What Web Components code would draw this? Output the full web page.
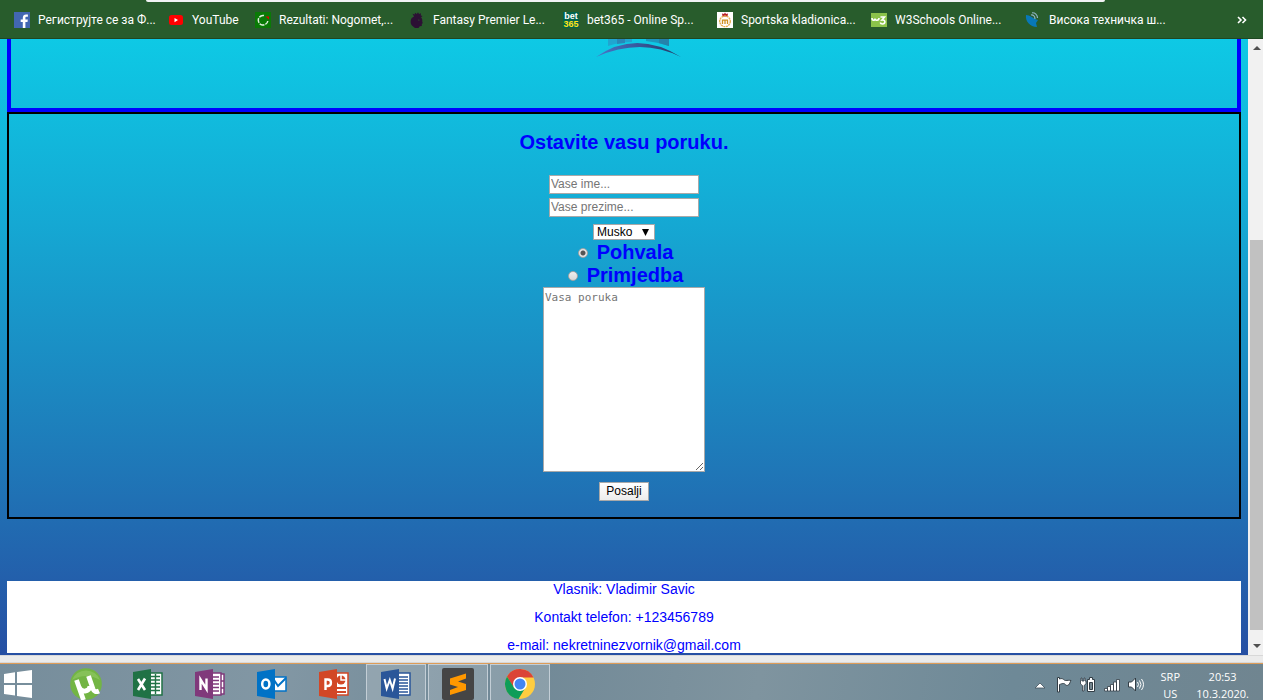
<!DOCTYPE html>
<html lang="sr">
<head>
<meta charset="utf-8">
<title>Nekretnine Zvornik</title>
<style>
  html, body { margin: 0; height: 100%; overflow: hidden; }
  body { font-family: "Liberation Sans", Arial, sans-serif; }
</style>
</head>
<body>
<desktop-screen></desktop-screen>

<script>
const define = (name, html, setup) => {
  const template = document.createElement('template');
  template.innerHTML = html;
  customElements.define(name, class extends HTMLElement {
    constructor() {
      super();
      this.attachShadow({ mode: 'open' }).append(template.content.cloneNode(true));
      if (setup) setup(this.shadowRoot, this);
    }
  });
};

/* One bookmark: icon slot and a label */
define('bookmark-link', `
<style>
  :host { display: block; flex: none; width: 154px; }
  :host([short]) { width: 87px; }
  a { display: flex; align-items: center; gap: 8px; color: #fff; text-decoration: none; white-space: nowrap; }
  ::slotted(svg) { flex: none; width: 16px; height: 16px; }
</style>
<a href="#"><slot name="icon"></slot><span><slot></slot></span></a>`);

define('bookmarks-bar', `
<style>
  :host { display: block; flex: none; background: #285c2c; border-bottom: 1px solid #1f4722; font: 12px/16px Roboto, "Open Sans", sans-serif; color: #fff; }
  .edge { height: 2px; margin: 0 158px 0 146px; background: #f1f3f4; border-radius: 0 0 8px 8px; }
  nav { display: flex; align-items: center; height: 36px; padding: 0 16px 0 14px; }
  button { margin-left: auto; padding: 0; border: 0; background: none; display: flex; }
</style>
<div class="edge"></div>
<nav aria-label="Bookmarks">
  <bookmark-link><svg slot="icon" viewBox="0 0 16 16"><path fill="#4267b2" d="M0 0h16v16H0z"/><path fill="#fff" d="M8.8 16v-6H6.7V7.600h2.100V5.800c0-2.100 1.300-3.300 3.200-3.300l1.900.1v2.200h-1.300c-1 0-1.200.5-1.200 1.200v1.600h2.400l-.3 2.400h-2.100v6z"/></svg>Региструјте се за Ф...</bookmark-link>
  <bookmark-link short><svg slot="icon" viewBox="0 0 16 16"><rect x="1" y="3" width="14" height="10" rx="2.500" fill="#f00"/><path fill="#fff" d="M6.500 6v4.200L10 8.100z"/></svg>YouTube</bookmark-link>
  <bookmark-link><svg slot="icon" viewBox="0 0 16 16"><path fill="#0a7a06" d="M0 0h16v16H0z"/><path fill="none" stroke="#dfeedd" stroke-width="1.500" stroke-dasharray="5 1" d="M9 3.500A4.800 4.800 0 1 0 12.800 9"/><path fill="#d00" d="M10.500 4.500h3.500v3z"/></svg>Rezultati: Nogomet,...</bookmark-link>
  <bookmark-link><svg slot="icon" viewBox="0 0 16 16"><path fill="#2c1034" d="M5 4.500 3.500 1.800 5.700 2.500 6 .8 7.800 2 9 .3 10 2l2-.8-.2 2.300 1.700.5-1.500 1.500c1.200 1 1.600 2.500 1.200 3.700l.6 2-1 .5v2.300l-2 .3L9.500 16H6l-2.500-2C1.500 12.500 1 8.500 2.800 6z"/><path fill="#285c2c" d="m9 7.500 2 .6-1.500.6z"/></svg>Fantasy Premier Le...</bookmark-link>
  <bookmark-link><svg slot="icon" viewBox="0 0 16 16"><path fill="#03634b" d="M0 0h16v16H0z"/><text x="8" y="7" text-anchor="middle" font-family="Liberation Sans" font-weight="700" font-size="9" fill="#fff">bet</text><text x="8" y="15" text-anchor="middle" font-family="Liberation Sans" font-weight="700" font-size="9" fill="#ffe418">365</text></svg>bet365 - Online Sp...</bookmark-link>
  <bookmark-link><svg slot="icon" viewBox="0 0 16 16"><path fill="#fff" d="M0 0h16v16H0z"/><path fill="#b8202a" d="M5 1.500 7 2l1-1.500L9 2l2-.5-.5 3h-5z"/><circle cx="8" cy="9.300" r="5.300" fill="none" stroke="#e7ad4b" stroke-width="1.400" stroke-dasharray="2 .6"/><path fill="none" stroke="#d09020" stroke-width="1.300" d="M5.500 12V8.200h5V12M8 8v4"/></svg>Sportska kladionica...</bookmark-link>
  <bookmark-link><svg slot="icon" viewBox="0 0 16 16"><path fill="#8bc34a" d="M0 1h16v14H0z"/><path fill="none" stroke="#fff" stroke-width="1.600" d="M1 6c0 3 3 3 3 .5 0 2.500 4 2.500 4-.5M9.500 5h4L11 8c4-.5 3.500 4 .5 4-1.200 0-2-.5-2.200-1.500"/></svg>W3Schools Online...</bookmark-link>
  <bookmark-link><svg slot="icon" viewBox="0 0 16 16"><path fill="#0878b8" d="M1 3c4 0 6 3 12 5l-2 3 1 4C5 15 0 9 1 3z"/><path fill="none" stroke="#8fb4c4" stroke-width="1.200" d="M6 3c2-.6 4 1 4 4M7 .8c3-.3 5.500 2 5.500 5.200"/></svg>Висока техничка ш...</bookmark-link>
  <button aria-label="More bookmarks"><svg width="10" height="8" viewBox="0 0 10 8"><path d="m1 1 3 3-3 3M5.500 1l3 3-3 3" fill="none" stroke="#fff" stroke-width="1.600"/></svg></button>
</nav>`);

define('site-hero', `
<style>
  :host { display: flex; justify-content: center; flex: none; box-sizing: border-box; height: 73px; border: solid #00f; border-width: 0 4px 4px; }
</style>
<svg width="114" height="20" viewBox="0 0 114 20" aria-hidden="true">
  <defs><linearGradient id="arc"><stop stop-color="#4a76c8"/><stop offset=".5" stop-color="#37579b"/><stop offset="1" stop-color="#27375f"/></linearGradient></defs>
  <path fill="#21a5d0" d="M41 0h24v3q-12 0-24 4z"/><path fill="#2a86b8" d="M50 0h8v4l-8 1z"/><path fill="#1c97bd" d="M79 0h23v7q-12-4-23-5z"/><path fill="#2482ab" d="M92 0h10v7l-10-3z"/>
  <path fill="url(#arc)" d="M29 18q40-28 85 0Q74-2 29 18z"/>
</svg>`);

define('message-form', `
<style>
  :host { display: block; flex: none; border: 2px solid #000; color: #00f; }
  form { display: flex; flex-direction: column; align-items: center; padding: 17px 0 16px; font-size: 20px; line-height: 23px; font-weight: 700; }
  h2 { margin: 0 0 21px; font-size: 20px; line-height: 23px; }
  input[type=text], select, textarea, button { box-sizing: border-box; margin: 0; border: 1px solid #a9a9a9; border-radius: 0; font: 12px/14px "Liberation Sans", Arial, sans-serif; color: #000; background-color: #fff; }
  input[type=text] { width: 150px; height: 19px; padding: 0 1px 2px; margin-bottom: 4px; }
  select { appearance: none; width: 62px; height: 16px; margin: 3px 0 1px; padding: 0 3px;
    background: #fff url("data:image/svg+xml,%3Csvg xmlns='http://www.w3.org/2000/svg' width='7' height='7'%3E%3Cpath d='M0 0h7L3.500 7z'/%3E%3C/svg%3E") no-repeat right 5px center; }
  label { display: flex; align-items: center; gap: 9px; padding-left: 3px; }
  input[type=radio] { appearance: none; box-sizing: border-box; width: 10px; height: 10px; margin: 0; border: 1px solid #a5a5a5; border-radius: 50%; background: linear-gradient(#eee, #d8d8d8); }
  input[type=radio]:checked { background: radial-gradient(circle, #555 0 2px, #e4e4e4 3px); }
  textarea { display: block; width: 162px; height: 185px; padding: 3px 1px; margin-bottom: 10px; font: 11px/14px "DejaVu Sans Mono", monospace; }
  ::placeholder { color: #757575; }
  button { height: 19px; padding: 0 6px 2px; background: linear-gradient(#fff, #ececec); }
</style>
<form onsubmit="return false">
  <h2>Ostavite vasu poruku.</h2>
  <input type="text" placeholder="Vase ime..." aria-label="Vase ime">
  <input type="text" placeholder="Vase prezime..." aria-label="Vase prezime">
  <select aria-label="Pol"><option>Musko</option><option>Zensko</option></select>
  <label><input type="radio" name="vrsta" checked>Pohvala</label>
  <label><input type="radio" name="vrsta">Primjedba</label>
  <textarea placeholder="Vasa poruka" aria-label="Vasa poruka"></textarea>
  <button>Posalji</button>
</form>`);

define('site-footer', `
<style>
  :host { display: flex; flex-direction: column; align-items: center; gap: 12px; flex: none; background: #fff; color: #00f; font-size: 14px; line-height: 16px; }
  p { margin: 0; }
</style>
<p>Vlasnik: Vladimir Savic</p>
<p>Kontakt telefon: +123456789</p>
<p>e-mail: nekretninezvornik@gmail.com</p>`);

define('scroll-track', `
<style>
  :host { display: flex; flex-direction: column; flex: none; width: 15px; background: #f1f1f1; }
  svg { display: block; flex: none; width: 15px; height: 17px; }
  .before { flex: 184; }
  .thumb { flex: 390; margin: 0 0 0 2px; background: #c1c1c1; }
  .after { flex: 8; }
</style>
<svg viewBox="0 0 15 17"><path fill="#505050" d="m5 11 4-4 4 4z"/></svg>
<div class="before"></div><div class="thumb"></div><div class="after"></div>
<svg viewBox="0 0 15 17"><path fill="#505050" d="m5 6 4 4 4-4z"/></svg>`);

define('web-page', `
<style>
  :host { display: flex; flex: 1; min-height: 0; }
  main { flex: 1; min-width: 0; overflow: hidden; display: flex; flex-direction: column; padding: 0 7px; background: linear-gradient(#0ec9e5, #15a8d3 30%, #1e7cba 66%, #264fa3); }
  site-footer { margin-top: 62px; }
</style>
<main><site-hero></site-hero><message-form></message-form><site-footer></site-footer></main>
<scroll-track></scroll-track>`);

define('task-button', `
<style>
  :host { display: block; flex: none; width: 62px; }
  button { box-sizing: border-box; display: flex; justify-content: center; width: 60px; height: 36px; margin: 0 1px; padding: 3px 0 0; border: 1px solid transparent; border-bottom: 0; background: none; }
  :host([open]) button { border-color: #c3ced6; background: #ffffff2e; }
  ::slotted(svg) { flex: none; width: 32px; height: 32px; }
</style>
<button><slot></slot></button>`,
(root, host) => root.querySelector('button').setAttribute('aria-label', host.getAttribute('label') || 'App'));

define('task-bar', `
<style>
  :host { display: flex; flex: none; height: 36px; overflow: hidden; border-top: 1px solid #dd9c58; color: #fff; font: 11px/17px "Open Sans", "Noto Sans", sans-serif;
    background: linear-gradient(100deg, #768d9b, #8297a4 22%, #708896 40%, #7f949f 60%, #6e8997 80%, #708590); }
  .start { flex: none; width: 55px; padding: 6px 0 0 4px; border: 0; background: none; display: flex; }
  .tray { display: flex; margin-left: auto; gap: 8px; padding: 12px 14px 0 0; }
  .tray svg { flex: none; width: 16px; height: 18px; }
  .text { text-align: center; margin-top: -8px; }
  .lang { width: 36px; }
</style>
<button class="start" aria-label="Start"><svg width="28" height="28" viewBox="0 0 28 28"><path fill="#fff" d="m0 4 11-1.700V13H0zM13 2l15-2v13H13zM0 15h11v10.500L0 24zM13 15h15v13l-15-2z"/></svg></button>
<task-button label="uTorrent"><svg viewBox="0 0 32 32"><circle cx="16" cy="16" r="15.800" fill="#73b544"/><path fill="#92ca65" d="M2 12a15 15 0 0 1 28 0Q16 4 2 12z" opacity=".6"/><path d="m6.500 12 7 20M9 19c2 6 11 5 11-1M18.500 8 23 21q1.500 4 6 2" fill="none" stroke="#fff" stroke-width="4.800"/></svg></task-button>
<task-button label="Excel"><svg viewBox="0 0 32 32"><path fill="#fff" stroke="#207245" stroke-width="1.500" d="M16 5h14v22H16z"/><path stroke="#207245" stroke-width="1.400" fill="none" d="M19 8.500h9M19 12h9M19 15.500h9M19 19h9M19 22.500h9M23.500 6v20"/><path fill="#207245" d="M1 4 19 1v30L1 28z"/><path d="m6 11 7 11M13 10.500 6 22" stroke="#fff" stroke-width="2.600"/></svg></task-button>
<task-button label="OneNote"><svg viewBox="0 0 32 32"><path fill="#fff" stroke="#80397b" stroke-width="1.500" d="M16 5h11v22H16zM27 6h3v7h-3zM27 13h3v7h-3zM27 20h3v6h-3z"/><path stroke="#80397b" stroke-width="1.500" d="M19 9h6M19 12.500h6M19 16h6M19 19.500h6M19 23h6"/><path fill="#80397b" d="M1 4 19 1v30L1 28z"/><path d="M6.500 22V11.500l6 9.500V10.500" fill="none" stroke="#fff" stroke-width="2.400"/></svg></task-button>
<task-button label="Outlook"><svg viewBox="0 0 32 32"><path fill="#fff" stroke="#0072c6" stroke-width="1.500" d="M16 9h14v14H16z"/><path d="m18 12 4 6 8-8" fill="none" stroke="#0072c6" stroke-width="2"/><path fill="#0072c6" d="M1 4 19 1v30L1 28z"/><ellipse cx="9.800" cy="16" rx="3.600" ry="4.500" fill="none" stroke="#fff" stroke-width="2.500"/></svg></task-button>
<task-button label="PowerPoint"><svg viewBox="0 0 32 32"><path fill="#fff" stroke="#d24726" stroke-width="1.500" d="M16 5h14v22H16z"/><circle cx="23" cy="12" r="4.500" fill="#d24726"/><path d="M23 7v5h5" fill="none" stroke="#fff" stroke-width="1.500"/><path d="M19 20h9M19 24h9" stroke="#d24726" stroke-width="2"/><path fill="#d24726" d="M1 4 19 1v30L1 28z"/><path d="M7.500 22V11.500h2.300c4.200 0 4.200 6.500 0 6.500H8" fill="none" stroke="#fff" stroke-width="2.400"/></svg></task-button>
<task-button open label="Word"><svg viewBox="0 0 32 32"><path fill="#fff" stroke="#2a5699" stroke-width="1.500" d="M16 5h14v22H16z"/><path stroke="#2a5699" stroke-width="1.500" d="M19 9h9M19 12h9M19 15h9M19 18h9M19 21h9M19 24h9"/><path fill="#2a5699" d="M1 4 19 1v30L1 28z"/><path d="m4.500 11 2.200 9.500L9.800 12l2.800 8.500 2.400-10" fill="none" stroke="#fff" stroke-width="2"/></svg></task-button>
<task-button open label="Sublime Text"><svg viewBox="0 0 32 32"><rect width="32" height="32" rx="2" fill="#454545"/><path fill="#ff9800" d="M8 10.500 24 5.500v5l-8 3 8 2.500v6L8 27v-5l8-3-8-2.500z"/></svg></task-button>
<task-button open label="Chrome"><svg viewBox="0 0 32 32"><circle cx="16" cy="16" r="15" fill="#ffcd40"/><path fill="#db4437" d="M3 8.500a15 15 0 0 1 26.500 1H16L9.700 19.500z"/><path fill="#0f9d58" d="M3 8.500A15 15 0 0 0 14.500 31l7-11.500-11.500 0z"/><circle cx="16" cy="16" r="7" fill="#fff"/><circle cx="16" cy="16" r="5.500" fill="#4285f4"/></svg></task-button>
<div class="tray">
  <svg viewBox="0 0 16 18"><path fill="#fff" stroke="#43525c" stroke-width=".8" d="m3 12 5-5 5 5z"/></svg>
  <svg viewBox="0 0 16 18"><path fill="#fff" stroke="#333e46" d="M1.500 1.500h2V3c4-1.500 4 1.500 6 1.500S13 4 15 4.500c-1 1.500-1 3-2.500 4.500-3 1.500-3-1.500-5-1.500s-2 .5-4 1V16h-2z"/></svg>
  <svg viewBox="0 0 16 18"><path fill="#fff" stroke="#333e46" d="M7.500 3.500h2v-2h3v2h2v12h-7z"/><path fill="#75868f" stroke="#333e46" d="M9.500 6.500h3v7h-3z"/><path fill="#fff" stroke="#333e46" stroke-width=".8" d="M1 2h1v3h2V2h1v3h1v3L4 9.500V15H2.500V9.500L.5 8V5H1z"/></svg>
  <svg viewBox="0 0 16 18"><path fill="#fff" stroke="#333e46" stroke-width=".8" d="M.5 12.500h3v2.500h-3zM3.500 10.500h3V15h-3zM6.500 8.500h3V15h-3zM9.500 6h3v9h-3zM12.500 3.500h3V15h-3z"/></svg>
  <svg viewBox="0 0 16 18"><path fill="#fff" stroke="#333e46" d="M.5 6h3l4-4v13l-4-4h-3z"/><path d="M9.500 6q2 2.500 0 5M11.500 4.500q3 4 0 8M13.500 3q4 5.500 0 11" fill="none" stroke="#fff"/></svg>
  <div class="text lang">SRP<br>US</div>
  <div class="text">20:53<br>10.3.2020.</div>
</div>`);

define('desktop-screen', `
<style>
  :host { display: flex; flex-direction: column; height: 100vh; }
  .frame { flex: none; height: 8px; background: #ebebeb; box-sizing: border-box; border: solid #d8d8d8; border-width: 1px 0; }
</style>
<bookmarks-bar></bookmarks-bar>
<web-page></web-page>
<div class="frame"></div>
<task-bar></task-bar>`);
</script>
</body>
</html>
